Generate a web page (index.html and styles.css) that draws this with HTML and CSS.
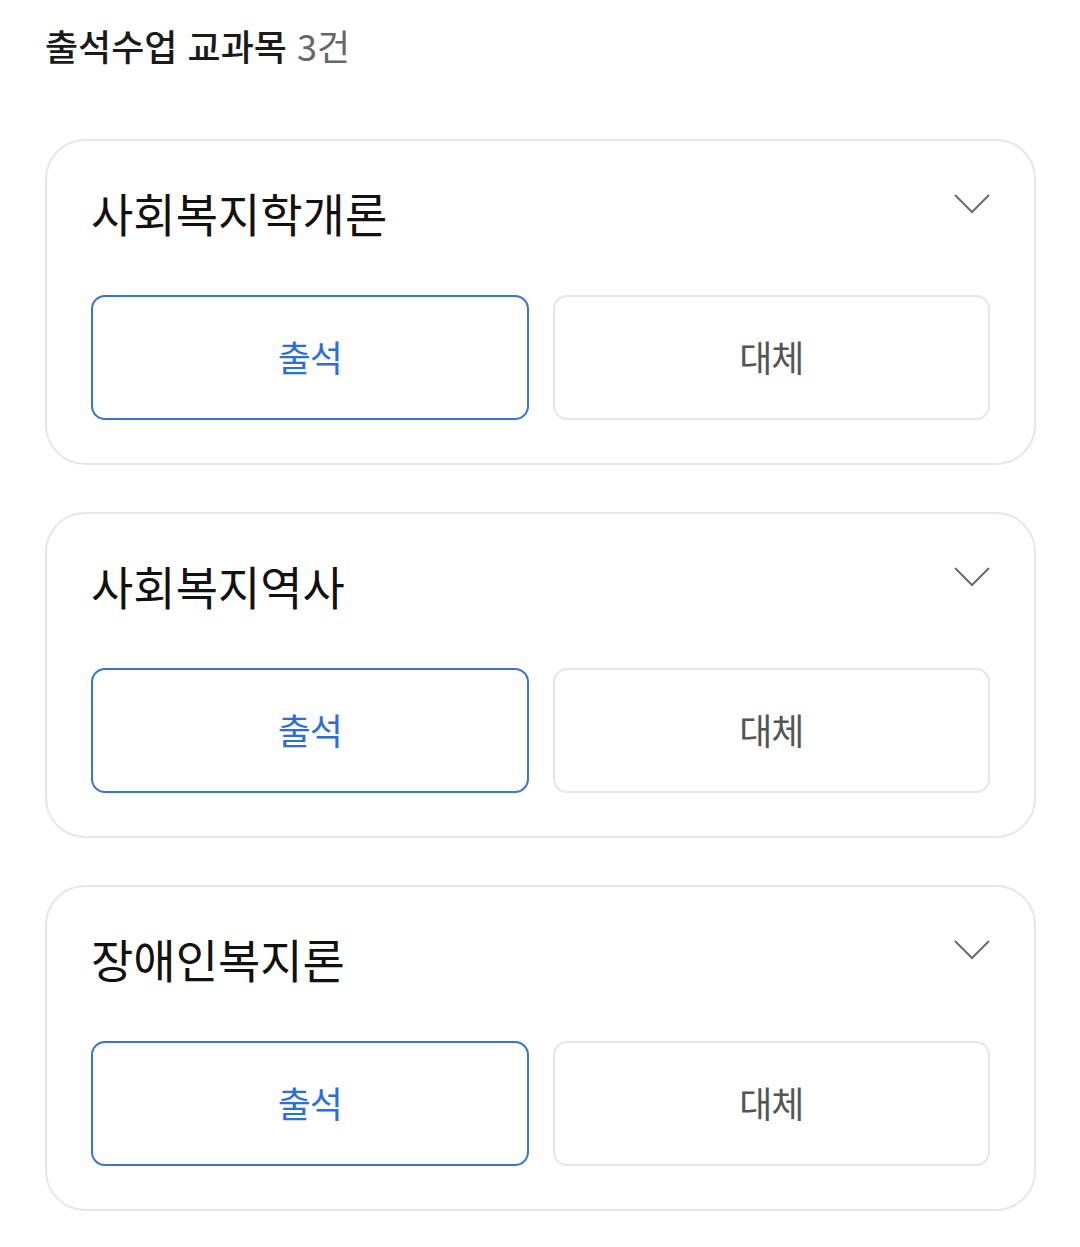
FILE: index.html
```
<!DOCTYPE html>
<html lang="ko">
<head>
<meta charset="utf-8">
<link rel="stylesheet" href="styles.css">
</head>
<body>
<main class="page">
  <h1 class="heading">출석수업 교과목 <span class="count">3건</span></h1>
  <section class="list">
    <article class="card">
      <div class="card-head">
        <h2 class="title">사회복지학개론</h2>
        <svg class="chev" viewBox="0 0 36 20" width="36" height="20"><path d="M1 1 L18 18 L35 1" fill="none" stroke="#6b6b6b" stroke-width="2"/></svg>
      </div>
      <div class="buttons">
        <button class="btn btn-on">출석</button>
        <button class="btn">대체</button>
      </div>
    </article>
    <article class="card">
      <div class="card-head">
        <h2 class="title">사회복지역사</h2>
        <svg class="chev" viewBox="0 0 36 20" width="36" height="20"><path d="M1 1 L18 18 L35 1" fill="none" stroke="#6b6b6b" stroke-width="2"/></svg>
      </div>
      <div class="buttons">
        <button class="btn btn-on">출석</button>
        <button class="btn">대체</button>
      </div>
    </article>
    <article class="card">
      <div class="card-head">
        <h2 class="title">장애인복지론</h2>
        <svg class="chev" viewBox="0 0 36 20" width="36" height="20"><path d="M1 1 L18 18 L35 1" fill="none" stroke="#6b6b6b" stroke-width="2"/></svg>
      </div>
      <div class="buttons">
        <button class="btn btn-on">출석</button>
        <button class="btn">대체</button>
      </div>
    </article>
  </section>
</main>
</body>
</html>
```
FILE: styles.css
```
* { box-sizing: border-box; }
html, body { margin: 0; padding: 0; background: #fff; }
body { font-family: "Noto Sans CJK KR", "Noto Sans", sans-serif; color: #111; }
.page { padding: 20px 44px 0 45px; }
.heading {
  margin: 0;
  font-size: 36px;
  font-weight: 500;
  line-height: 50px;
  letter-spacing: 0;
  color: #1a1a1a;
}
.count { color: #666; font-weight: 400; }
.list { display: flex; flex-direction: column; gap: 47px; margin-top: 69px; }
.card {
  border: 2px solid #e6e6e6;
  border-radius: 40px;
  height: 326px;
  padding: 0 44px 0 44px;
  display: flex;
  flex-direction: column;
}
.card-head {
  display: flex;
  justify-content: space-between;
  align-items: flex-start;
  height: 154px;
  padding-top: 41px;
}
.title {
  margin: 0;
  font-size: 46px;
  font-weight: 400;
  line-height: 60px;
  letter-spacing: 0;
  color: #111;
}
.chev { margin-top: 12px; display: block; }
.buttons { display: grid; grid-template-columns: 1fr 1fr; gap: 24px; }
.btn {
  height: 125px;
  border: 2px solid #e6e6e6;
  border-radius: 14px;
  background: #fff;
  font-family: inherit;
  font-size: 36px;
  letter-spacing: -1px;
  color: #555;
  padding: 0 0 4px;
}
.btn-on { border-color: #3a75cc; color: #2c6fd4; }
```
